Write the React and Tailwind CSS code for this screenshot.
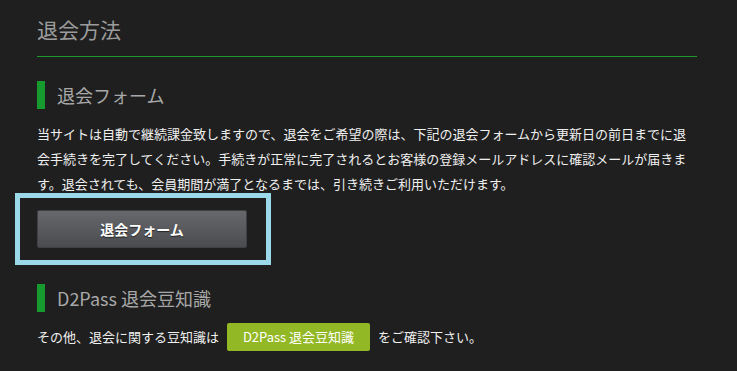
const font = { fontFamily: '"Noto Sans CJK JP", "Noto Sans", sans-serif' };

const SectionTitle = ({ children }) => (
  <h2 className="h-[28px] border-l-[8px] border-[#179a2d] pl-[12px] text-[18px] leading-[28px] text-[#a8a8a8]">
    {children}
  </h2>
);

const App = () => {
  return (
    <div
      className="min-h-[371px] w-full bg-[#1f1f1f] px-[37px] pt-[14px] text-[13px] text-[#f0f0f0]"
      style={font}
    >
      {/* Page title */}
      <h1 className="w-[660px] border-b border-[#1b9a2b] pb-[12px] text-[21px] leading-[30px] text-[#9c9c9c]">
        退会方法
      </h1>

      {/* 退会フォーム */}
      <div className="mt-[24px]">
        <SectionTitle>退会フォーム</SectionTitle>
      </div>
      <p className="mt-[12px] w-[660px] leading-[25px]">
        当サイトは自動で継続課金致しますので、退会をご希望の際は、下記の退会フォームから更新日の前日までに退会手続きを完了してください。手続きが正常に完了されるとお客様の登録メールアドレスに確認メールが届きます。退会されても、会員期間が満了となるまでは、引き続きご利用いただけます。
      </p>

      <div className="ml-[-22px] mt-[-3px] h-[72px] w-[256px] border-[5px] border-[#9bd9ea] pl-[17px] pt-[12px]">
        <button className="flex h-[38px] w-[210px] items-center justify-center rounded-[2px] border border-[#3e4044] bg-gradient-to-b from-[#66686c] to-[#4a4c50] text-[14px] font-bold text-white [text-shadow:0_1px_1px_rgba(0,0,0,0.6)]">
          退会フォーム
        </button>
      </div>

      {/* D2Pass 退会豆知識 */}
      <div className="mt-[19px]">
        <SectionTitle>D2Pass 退会豆知識</SectionTitle>
      </div>
      <div className="mt-[11px] flex items-center">
        <span>その他、退会に関する豆知識は</span>
        <a className="ml-[8px] flex h-[28px] w-[143px] items-center justify-center rounded-[2px] bg-[#93b826] text-white">
          D2Pass 退会豆知識
        </a>
        <span className="ml-[8px]">をご確認下さい。</span>
      </div>
    </div>
  );
};

export default App;
